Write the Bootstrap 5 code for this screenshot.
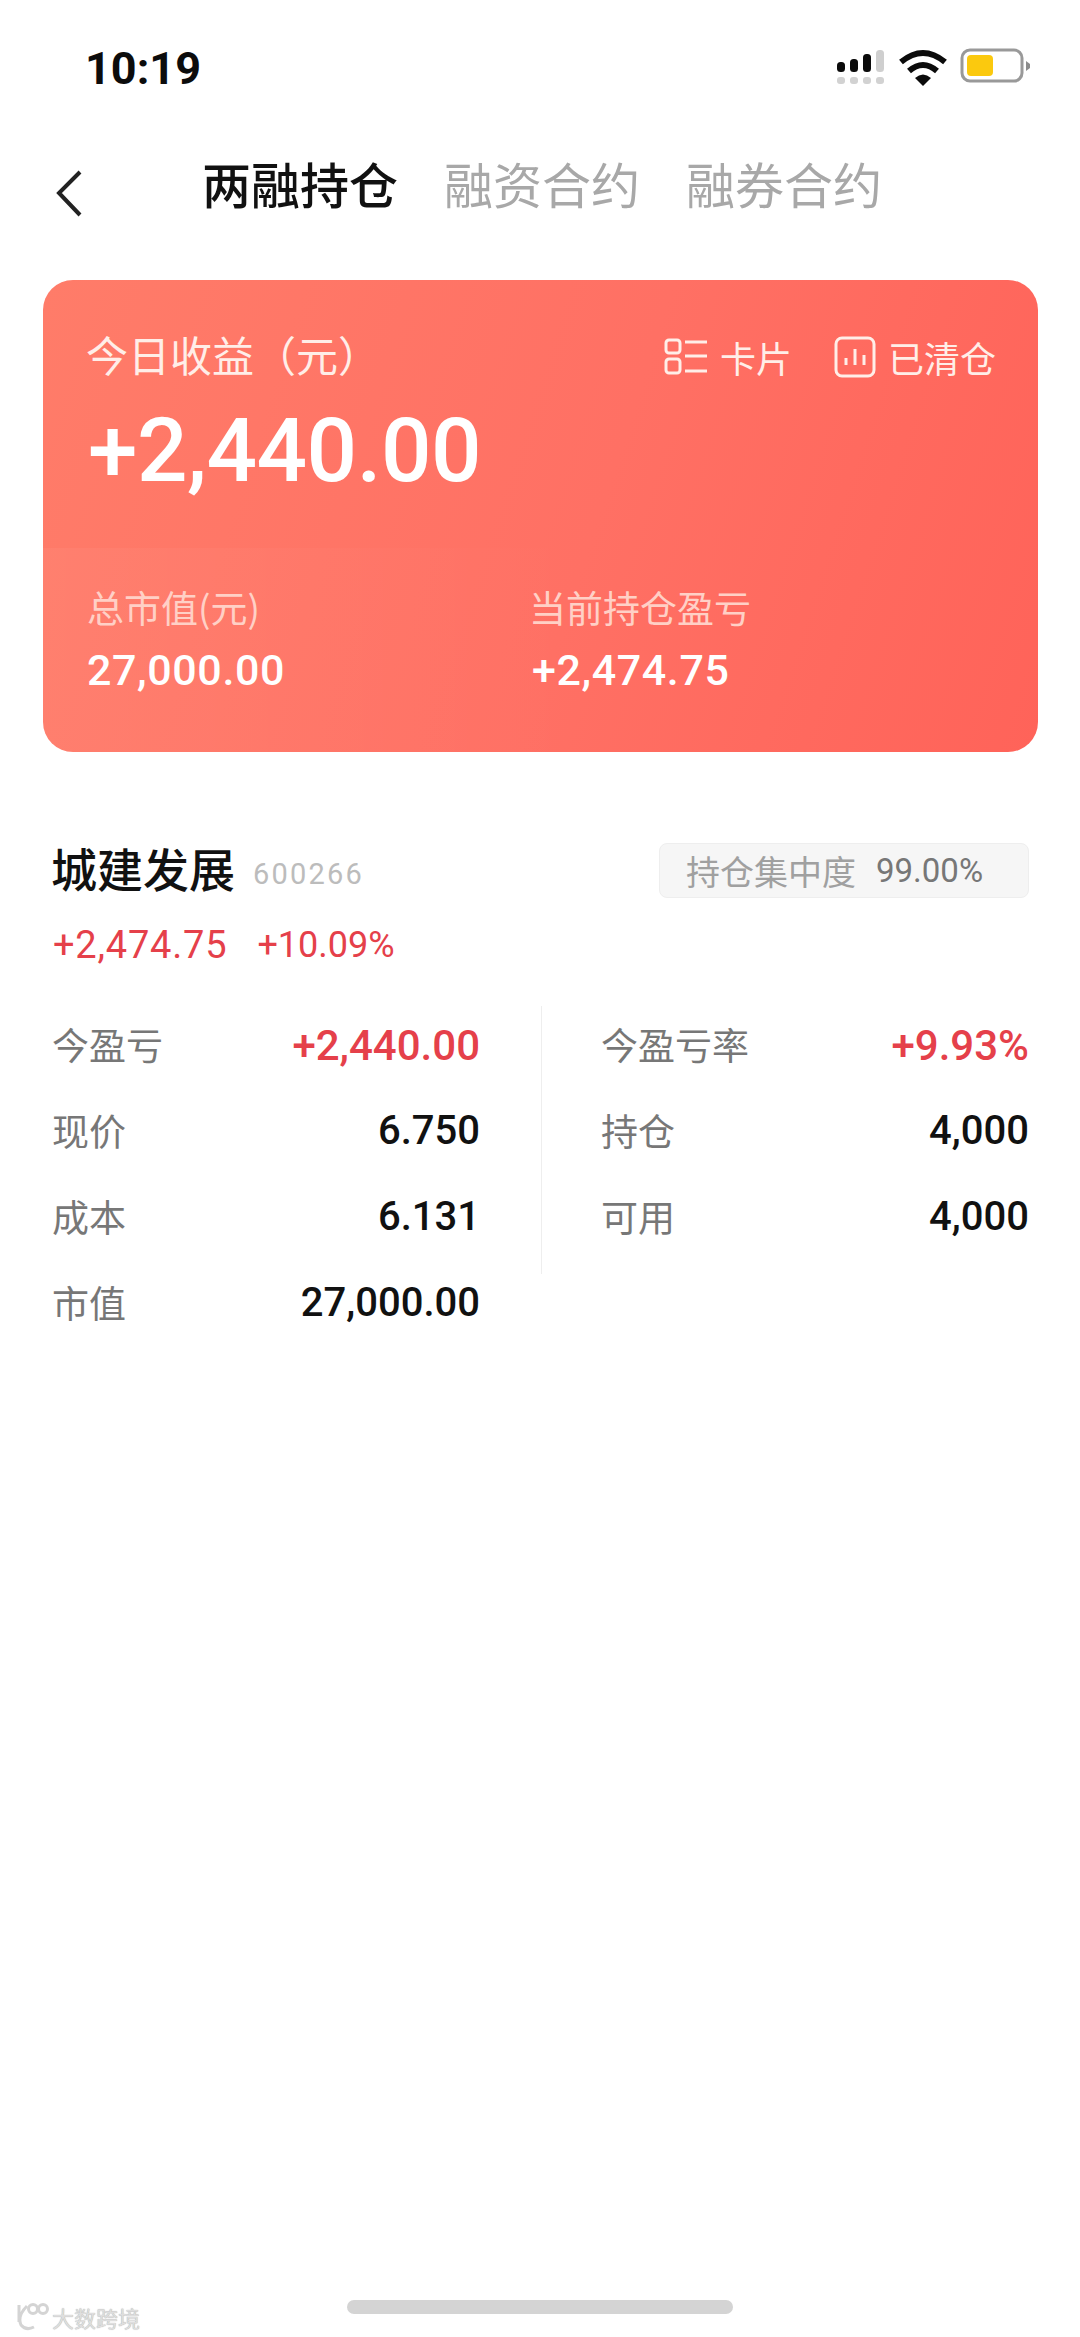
<!DOCTYPE html>
<html lang="zh-CN">
<head>
  <meta charset="UTF-8" />
  <meta name="viewport" content="width=device-width, initial-scale=1" />
  <title>两融持仓</title>
  <link href="https://cdn.jsdelivr.net/npm/bootstrap@5.3.3/dist/css/bootstrap.min.css" rel="stylesheet" />
  <style>
    body { width: 1080px; height: 2337px; overflow: hidden; background: #fff; position: relative;
      font-family: Roboto, "Noto Sans CJK SC", sans-serif; }
    .cjk { font-family: "Noto Sans CJK SC", sans-serif; }

    .status-bar { height: 132px; padding: 45px 47px 0 85px; }
    .clock { font: 700 45px/48px Roboto, sans-serif; color: #0c0c0c; }
    .status-icons { margin-top: 3px; }

    .tab-row { height: 102px; padding-left: 55px; }
    .tab-back { width: 147px; padding-top: 20px; }
    .tab-item { font-size: 49px; line-height: 60px; color: #a8a8a8; margin-right: 46px; }
    .tab-item.is-on { color: #111; font-weight: 500; }

    .profit-card { margin: 46px 42px 0 43px; height: 472px; border-radius: 30px; color: #fff;
      background: linear-gradient(108deg, #ff7c69 0%, #ff7064 55%, #ff6359 100%); overflow: hidden; }
    .profit-top { height: 268px; padding: 48px 42px 0 44px; }
    .profit-title { font-size: 42px; line-height: 52px; color: #ffeee8; margin-left: -1px; }
    .profit-tools { font-size: 36px; line-height: 52px; color: #ffeee8; padding-top: 3px; gap: 12px; }
    .profit-tools svg + span + svg { margin-left: 30px; }
    .profit-num { font-size: 89px; line-height: 100px; font-weight: 500; letter-spacing: -.5px; margin-top: 18px; margin-left: 1px; }
    .profit-bottom { height: 204px; padding: 34px 0 0 44px; background: linear-gradient(90deg, rgba(255,255,255,.045), rgba(255,255,255,0) 55%); }
    .profit-col { width: 442px; }
    .profit-label { font-size: 37px; line-height: 50px; color: #ffd0c6; }
    .profit-val { font-size: 43px; line-height: 50px; font-weight: 500; margin-top: 13px; letter-spacing: .6px; }
    .profit-val.is-gain { margin-left: 3px; }

    .stock { padding: 0 48px 0 53px; margin-top: 86px; }
    .stock-name { font-size: 46px; line-height: 58px; font-weight: 500; color: #111; margin-left: -2px; }
    .stock-code { font-size: 29px; line-height: 36px; color: #bcbcbc; margin-left: 18px; letter-spacing: 2.2px; }
    .conc-chip { width: 370px; height: 55px; background: #f6f6f6; border: 1px solid #eee; border-radius: 8px; padding-left: 26px; margin-top: 5px; margin-right: 3px; }
    .conc-label { font-size: 34px; color: #a0a0a0; }
    .conc-val { font-size: 33px; color: #777; margin-left: 20px; }
    .stock-red { color: #e5404a; }
    .stock-gain { font-size: 38px; line-height: 44px; margin-top: 25px; letter-spacing: .8px; gap: 30px; }
    .stock-pct { font-size: 36px; letter-spacing: 0; }

    .stat-area { margin-top: 35px; }
    .stat-col { width: 427px; flex: none; }
    .stat-row { height: 86px; }
    .stat-label { font-size: 37px; color: #777; margin-left: -1px; }
    .stat-val { font-size: 40px; font-weight: 500; color: #111; }
    .stat-val.stock-red { color: #e5404a; font-size: 42px; }
    .stat-rule { width: 1px; height: 268px; background: #eee; margin: 4px 60px 0 61px; flex: none; }

    .home-bar { width: 386px; height: 14px; border-radius: 7px; background: #d4d4d4; margin: auto auto 23px; }
    .wm-mark { position: absolute; left: 16px; bottom: 5px; color: #dedede; font-size: 22px; line-height: 30px; text-shadow: 0 0 1px #999; }
  </style>
</head>
<body class="d-flex flex-column">
  <div class="status-bar d-flex justify-content-between align-items-start">
    <div class="clock">10:19</div>
    <svg width="198" height="44" viewBox="0 0 198 44" class="status-icons" aria-hidden="true">
      <!-- signal -->
      <g fill="#0b0b0b">
        <rect x="2" y="14" width="8" height="10" rx="3.5"/>
        <rect x="15" y="11" width="8" height="13" rx="3.5"/>
        <rect x="28" y="6" width="8" height="18" rx="3.5"/>
      </g>
      <rect x="41" y="2" width="8" height="22" rx="3.5" fill="#cfcfcf"/>
      <g fill="#d2d2d2">
        <rect x="2" y="29" width="8" height="7" rx="3"/>
        <rect x="15" y="29" width="8" height="7" rx="3"/>
        <rect x="28" y="29" width="8" height="7" rx="3"/>
        <rect x="41" y="29" width="8" height="7" rx="3"/>
      </g>
      <!-- wifi -->
      <g fill="none" stroke="#0b0b0b" stroke-width="6">
        <path d="M66 14 Q88 -4 110 14"/>
        <path d="M74 23 Q88 11 102 23"/>
      </g>
      <path d="M80 30 Q88 23 96 30 L88 38 Z" fill="#0b0b0b"/>
      <!-- battery -->
      <rect x="127" y="2" width="60" height="31" rx="8" fill="#fff" stroke="#999" stroke-width="3"/>
      <rect x="132" y="7" width="26" height="21" rx="4" fill="#fbc90e"/>
      <path d="M191 13 L195 16 V20 L191 23 Z" fill="#8c8c8c"/>
    </svg>
  </div>

  <div class="tab-row d-flex align-items-center cjk">
    <div class="tab-back">
      <svg width="30" height="48" viewBox="0 0 30 48" class="d-block" aria-hidden="true"><path d="M25 3 L4 24 L25 46" fill="none" stroke="#222" stroke-width="4"/></svg>
    </div>
    <div class="tab-item is-on">两融持仓</div>
    <div class="tab-item">融资合约</div>
    <div class="tab-item">融券合约</div>
  </div>

  <div class="profit-card">
    <div class="profit-top">
      <div class="d-flex justify-content-between">
        <div class="profit-title cjk">今日收益（元）</div>
        <div class="profit-tools cjk d-flex align-items-center">
          <svg width="44" height="38" viewBox="0 0 44 38" aria-hidden="true">
            <g fill="none" stroke="#ffeee8" stroke-width="3">
              <rect x="2" y="2" width="14" height="13" rx="3"/>
              <rect x="2" y="21" width="14" height="14" rx="3"/>
              <path d="M21 4H43M21 18H43M21 33H43"/>
            </g>
          </svg>
          <span>卡片</span>
          <svg width="42" height="42" viewBox="0 0 42 42" aria-hidden="true">
            <rect x="2" y="2" width="38" height="38" rx="6" fill="none" stroke="#ffeee8" stroke-width="3"/>
            <path d="M12 22V29M21 13V29M30 19V29" fill="none" stroke="#ffeee8" stroke-width="3"/>
          </svg>
          <span>已清仓</span>
        </div>
      </div>
      <div class="profit-num">+2,440.00</div>
    </div>
    <div class="profit-bottom d-flex">
      <div class="profit-col">
        <div class="profit-label cjk">总市值(元)</div>
        <div class="profit-val">27,000.00</div>
      </div>
      <div>
        <div class="profit-label cjk">当前持仓盈亏</div>
        <div class="profit-val is-gain">+2,474.75</div>
      </div>
    </div>
  </div>

  <div class="stock">
    <div class="d-flex justify-content-between align-items-start">
      <div class="d-flex align-items-end">
        <div class="stock-name cjk">城建发展</div>
        <div class="stock-code mb-1">600266</div>
      </div>
      <div class="conc-chip d-flex align-items-center">
        <span class="conc-label cjk">持仓集中度</span>
        <span class="conc-val">99.00%</span>
      </div>
    </div>
    <div class="stock-gain stock-red d-flex align-items-center">
      <span>+2,474.75</span>
      <span class="stock-pct">+10.09%</span>
    </div>

    <div class="stat-area d-flex align-items-start">
      <div class="stat-col">
        <div class="stat-row d-flex justify-content-between align-items-center"><span class="stat-label cjk">今盈亏</span><span class="stat-val stock-red">+2,440.00</span></div>
        <div class="stat-row d-flex justify-content-between align-items-center"><span class="stat-label cjk">现价</span><span class="stat-val">6.750</span></div>
        <div class="stat-row d-flex justify-content-between align-items-center"><span class="stat-label cjk">成本</span><span class="stat-val">6.131</span></div>
        <div class="stat-row d-flex justify-content-between align-items-center"><span class="stat-label cjk">市值</span><span class="stat-val">27,000.00</span></div>
      </div>
      <div class="stat-rule"></div>
      <div class="stat-col">
        <div class="stat-row d-flex justify-content-between align-items-center"><span class="stat-label cjk">今盈亏率</span><span class="stat-val stock-red">+9.93%</span></div>
        <div class="stat-row d-flex justify-content-between align-items-center"><span class="stat-label cjk">持仓</span><span class="stat-val">4,000</span></div>
        <div class="stat-row d-flex justify-content-between align-items-center"><span class="stat-label cjk">可用</span><span class="stat-val">4,000</span></div>
      </div>
    </div>
  </div>

  <div class="home-bar"></div>

  <div class="wm-mark cjk d-flex align-items-end">
    <svg width="36" height="30" viewBox="0 0 36 30" aria-hidden="true">
      <g fill="none" stroke="#d4d4d4" stroke-width="3">
        <path d="M3 3V20M11 4Q1 14 5 23Q10 29 18 25"/>
        <circle cx="17" cy="7" r="4.5"/>
        <circle cx="27" cy="7" r="4.5"/>
      </g>
    </svg>
    <span>大数跨境</span>
  </div>
</body>
</html>
